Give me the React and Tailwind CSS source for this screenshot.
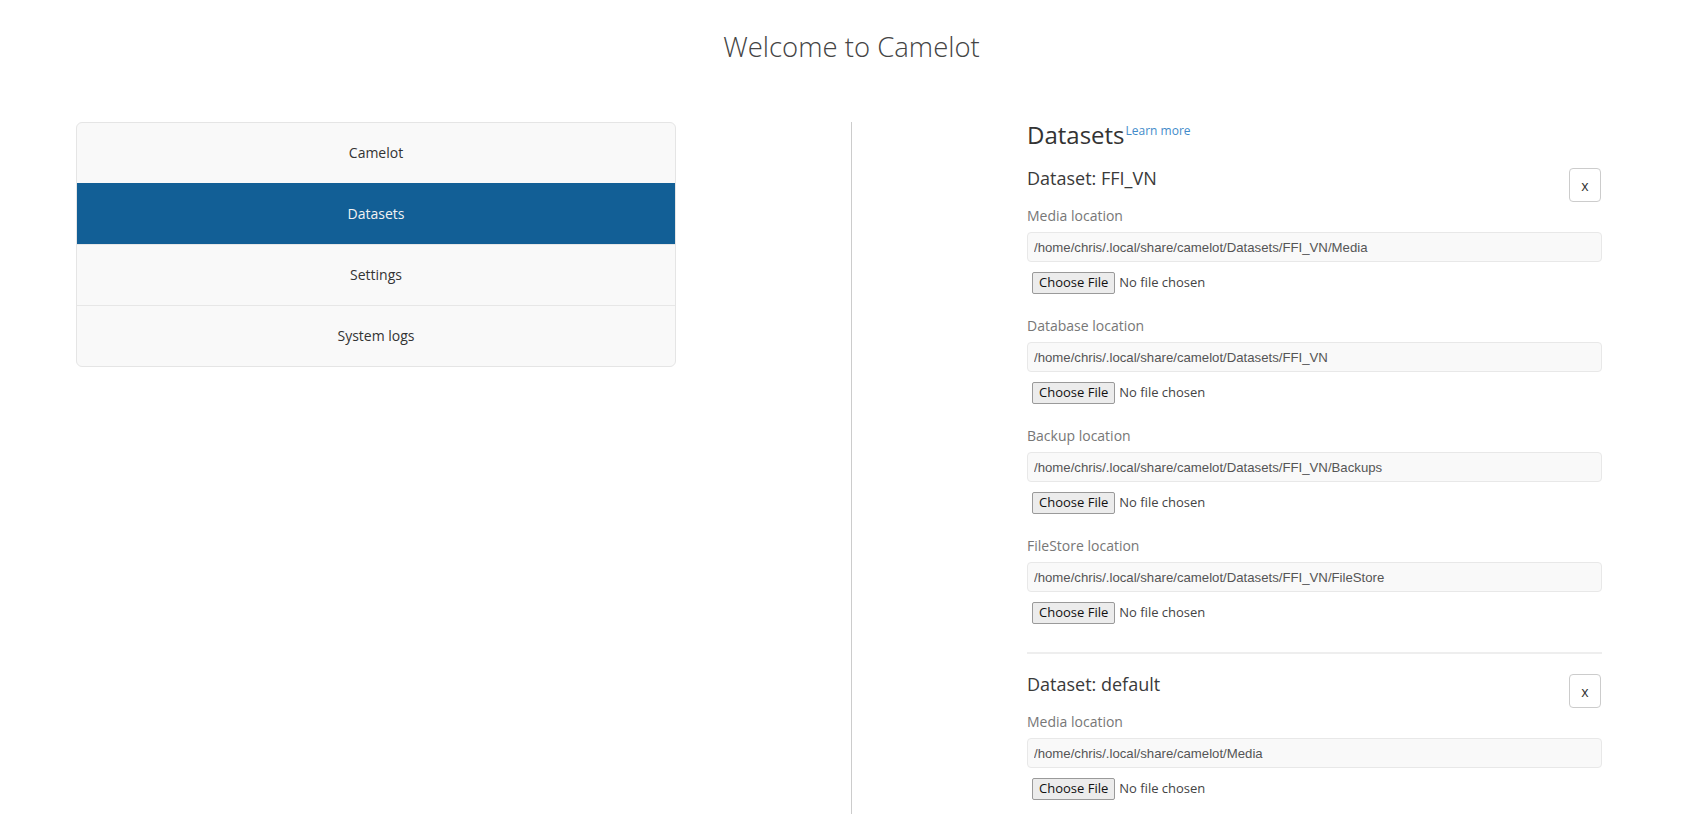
import React from "react";

const navItems = ["Camelot", "Datasets", "Settings", "System logs"];

const datasets = [
  {
    name: "FFI_VN",
    fields: [
      ["Media location", "/home/chris/.local/share/camelot/Datasets/FFI_VN/Media"],
      ["Database location", "/home/chris/.local/share/camelot/Datasets/FFI_VN"],
      ["Backup location", "/home/chris/.local/share/camelot/Datasets/FFI_VN/Backups"],
      ["FileStore location", "/home/chris/.local/share/camelot/Datasets/FFI_VN/FileStore"],
    ],
  },
  {
    name: "default",
    fields: [["Media location", "/home/chris/.local/share/camelot/Media"]],
  },
];

const Field = ({ label, value, first }) => (
  <div className={first ? "mt-[4px]" : "mt-[22px]"}>
    <label className="block text-[14px] leading-[20px] text-[#777]">{label}</label>
    <input
      readOnly
      value={value}
      className="mt-[6px] block h-[30px] w-full rounded-[4px] border border-[#e8e8e8] bg-[#f9f9f9] px-[6px] font-['Liberation_Sans',Arial,sans-serif] text-[13.2px] text-[#555] outline-none"
    />
    <div className="mt-[10px] ml-[5px] flex h-[22px] items-center text-[13px]">
      <button
        type="button"
        className="flex h-[22px] items-center rounded-[2px] border border-[#9a9a9a] bg-[#ececec] px-[6px] text-[#111]"
      >
        Choose File
      </button>
      <span className="ml-[4px] text-[#444]">No file chosen</span>
    </div>
  </div>
);

const Dataset = ({ ds, first }) => (
  <div className={first ? "mt-[20px]" : "mt-[28px] border-t-2 border-[#eeeeee] pt-[20px]"}>
    <div className="flex items-start justify-between">
      <h4 className="text-[18px] leading-[20px] text-[#3a3a3a]">Dataset: {ds.name}</h4>
      <button
        type="button"
        className="mr-px flex h-[34px] w-[32px] items-center justify-center rounded-[4px] border border-[#cccccc] bg-white text-[14px] text-[#333]"
      >
        x
      </button>
    </div>
    {ds.fields.map(([label, value], i) => (
      <Field key={label} label={label} value={value} first={i === 0} />
    ))}
  </div>
);

export default function App() {
  return (
    <div className="min-h-screen bg-white font-['Open_Sans',sans-serif] text-[#333]">
      <h1 className="pt-[32px] pl-[18px] text-center text-[27.5px] font-light leading-[30px] text-[#444]">
        Welcome to Camelot
      </h1>

      <div className="mt-[60px] flex">
        <div className="w-[851px] shrink-0 pl-[76px]">
          <div className="w-[600px] overflow-hidden rounded-[6px] border border-[#e5e5e5] bg-[#f9f9f9]">
            {navItems.map((item, i) => (
              <div
                key={item}
                className={`py-[20px] text-center text-[14px] leading-[20px] ${
                  i > 0 ? "border-t" : ""
                } ${
                  item === "Datasets"
                    ? "border-[#125f96] bg-[#125f96] text-[#f2f2f2]"
                    : "border-[#e7e7e7] text-[#333]"
                }`}
              >
                {item}
              </div>
            ))}
          </div>
        </div>

        <div className="min-h-[692px] flex-1 border-l border-[#cccccc] pl-[175px]">
          <div className="w-[575px]">
            <h3 className="text-[24px] leading-[26px] text-[#333]">
              Datasets
              <a href="#" className="ml-px align-[9px] text-[12px] leading-none text-[#428bca]">
                Learn more
              </a>
            </h3>
            {datasets.map((ds, i) => (
              <Dataset key={ds.name} ds={ds} first={i === 0} />
            ))}
          </div>
        </div>
      </div>
    </div>
  );
}
